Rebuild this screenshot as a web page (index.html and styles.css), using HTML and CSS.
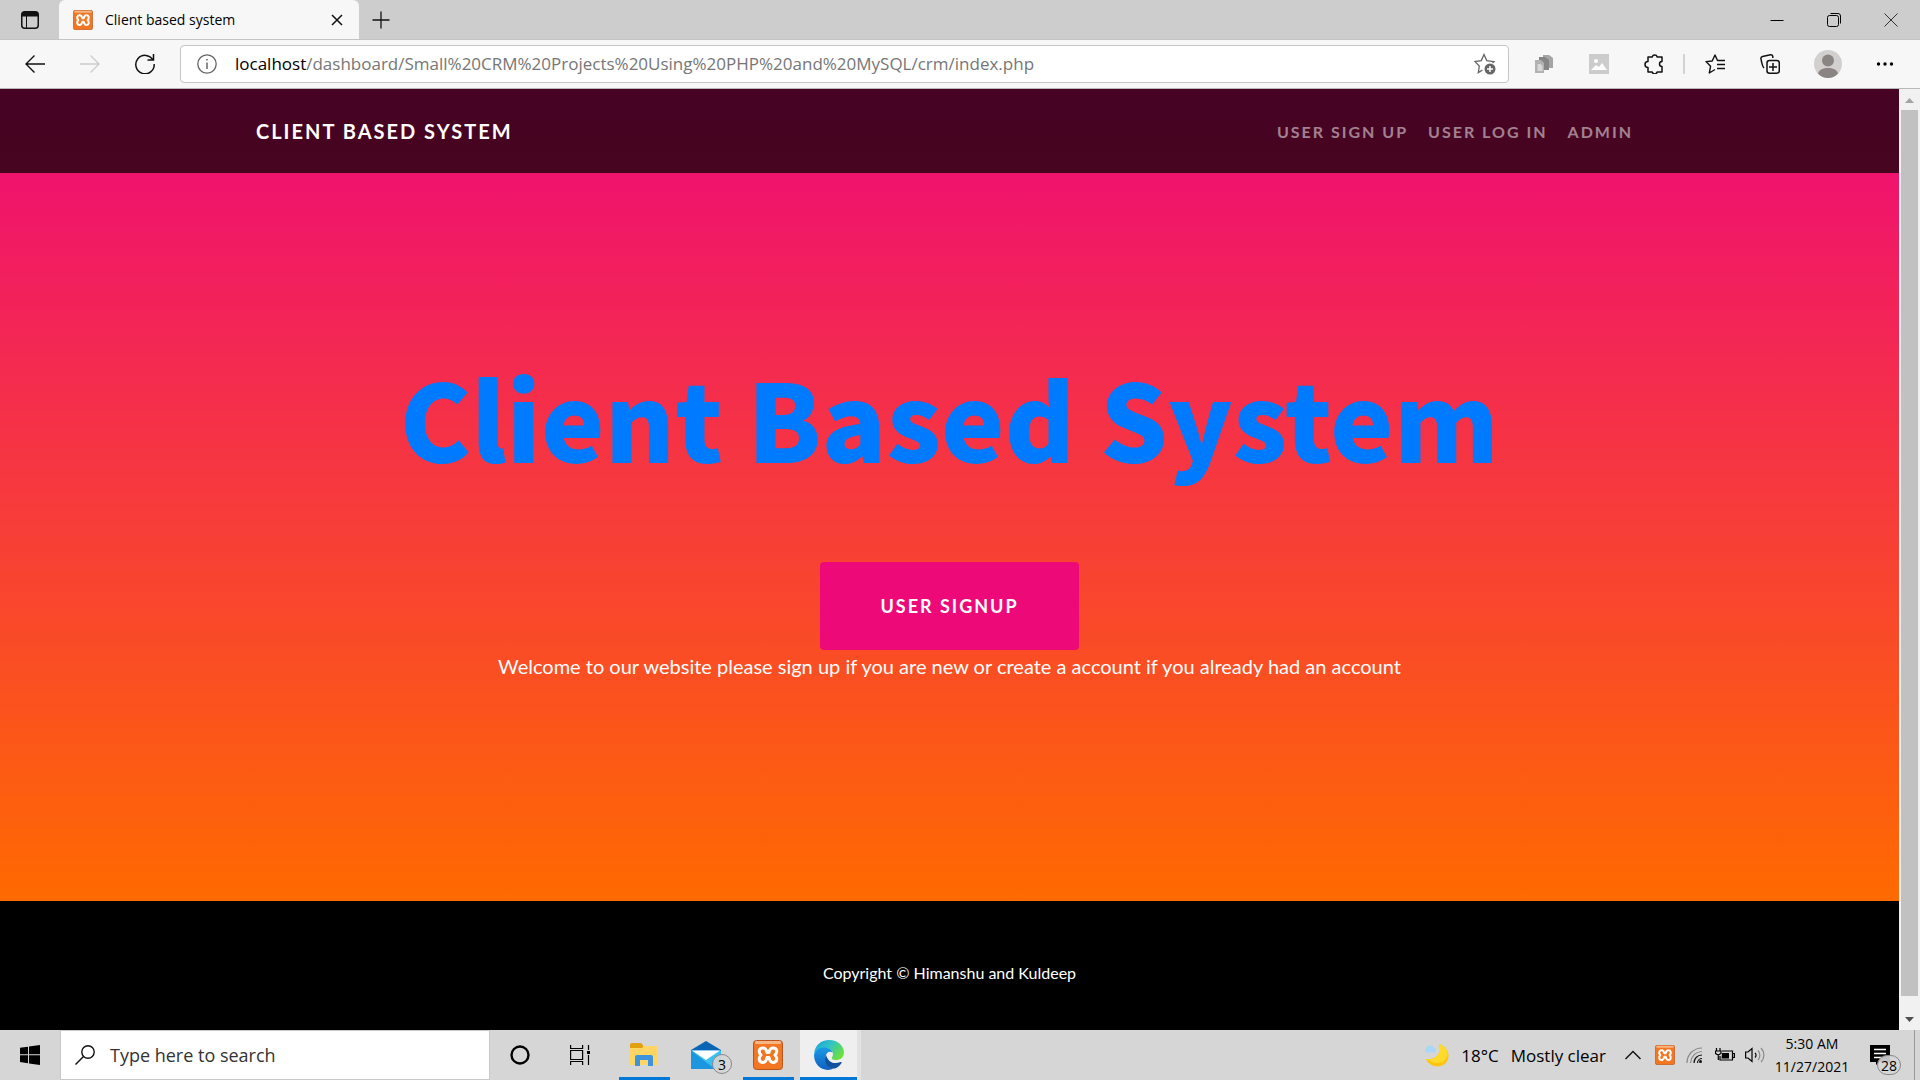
FILE: index.html
```html
<!DOCTYPE html>
<html lang="en">
<head>
<meta charset="utf-8">
<title>Client based system</title>
<link rel="stylesheet" href="styles.css">
</head>
<body>
<svg class="defs" aria-hidden="true">
  <defs>
    <symbol id="xampp" viewBox="0 0 30 30">
      <rect x="0.5" y="0.5" width="29" height="29" rx="3" fill="#f37623" stroke="#b5561c"/>
      <rect x="2" y="1" width="26" height="3" rx="1" fill="#f9b483"/>
      <path d="M10 8C6 8 5 12 8 15 5 18 6 22.500 10 22.500c3 0 3.500-2.500 4-5h2c.5 2.500 1 5 4 5 4 0 5-4.500 2-7.500 3-3 2-7-2-7-3 0-3.500 2-4 4.500h-2C13.500 10 13 8 10 8z" fill="none" stroke="#fff" stroke-width="3" stroke-linejoin="round"/>
    </symbol>
  </defs>
</svg>

<header class="browser">
  <div class="tabstrip">
    <button class="tab-actions" aria-label="Tab actions">
      <svg width="18" height="18" viewBox="0 0 18 18" fill="none" stroke="#111"><rect x="0.750" y="0.750" width="16.500" height="16.500" rx="3" stroke-width="1.500"/><path d="M1 3h16M1 4.500h16M1.500 2h15" stroke-width="2"/><path d="M5.500 5v12"/></svg>
    </button>
    <div class="tab">
      <svg width="20" height="20"><use href="#xampp"/></svg>
      <span class="tab-title">Client based system</span>
      <button class="tab-close" aria-label="Close tab"><svg width="12" height="12" viewBox="0 0 12 12" stroke="#111" stroke-width="1.500"><path d="M1 1l10 10M11 1L1 11"/></svg></button>
    </div>
    <button class="new-tab" aria-label="New tab"><svg width="18" height="18" viewBox="0 0 18 18" stroke="#111" stroke-width="1.300"><path d="M9 .5v17M.5 9h17"/></svg></button>
    <div class="window-buttons">
      <button aria-label="Minimize"><svg width="14" height="14" viewBox="0 0 14 14" stroke="#000"><path d="M.5 7.500h13"/></svg></button>
      <button aria-label="Restore"><svg width="14" height="14" viewBox="0 0 14 14" fill="none" stroke="#000"><rect x=".5" y="2.500" width="11" height="11" rx="2"/><path d="M3.500.5h7.500a2.500 2.500 0 0 1 2.500 2.500v7.500"/></svg></button>
      <button aria-label="Close"><svg width="14" height="14" viewBox="0 0 14 14" stroke="#333"><path d="M.5.5l13 13M13.500.5l-13 13"/></svg></button>
    </div>
  </div>
  <div class="toolbar">
    <button aria-label="Back"><svg width="20" height="18" viewBox="0 0 20 18" fill="none" stroke="#111" stroke-width="1.400"><path d="M20 9H1M9.500.5L1 9l8.500 8.500"/></svg></button>
    <button aria-label="Forward" disabled><svg width="20" height="18" viewBox="0 0 20 18" fill="none" stroke="#ccc" stroke-width="1.400"><path d="M0 9h19M10.500.5L19 9l-8.500 8.500"/></svg></button>
    <button aria-label="Refresh"><svg width="20" height="20" viewBox="0 0 20 20" fill="none" stroke="#111" stroke-width="1.500"><path d="M18 6A9.200 9.200 0 1 0 19.200 10M18.500 0v6h-6"/></svg></button>
    <div class="address">
      <svg width="20" height="20" viewBox="0 0 20 20" fill="none" stroke="#666" stroke-width="1.300"><circle cx="10" cy="10" r="9.200"/><path d="M10 8.500v6.500M10 5v1.600" stroke-width="1.500"/></svg>
      <a class="url" href="#"><span>localhost</span>/dashboard/Small%20CRM%20Projects%20Using%20PHP%20and%20MySQL/crm/index.php</a>
      <button class="favorite" aria-label="Add to favorites"><svg width="22" height="22" viewBox="0 0 22 22" fill="none" stroke="#666" stroke-width="1.300"><path d="M8.500 17L4.300 19.600 5.300 13 1 8.600 7.300 7.600 10 1.500 12.800 7.600 20 8.600 18.500 10"/><circle cx="16" cy="16" r="5.500" fill="#666" stroke="none"/><path d="M16 13v6M13 16h6" stroke="#fff" stroke-width="1.500"/></svg></button>
    </div>
    <button aria-label="Copy extension"><svg width="20" height="20" viewBox="0 0 20 20"><path d="M9 1h6l4 3v10H9z" fill="#a5a5a5"/><path d="M5 3h6l4 3v10H5z" fill="#858585"/><path d="M1 6h6l3 3v10H1z" fill="#b2b2b2"/><path d="M3.500 10h3l2 2v5h-5z" fill="#d8d8d8"/></svg></button>
    <button aria-label="Picture extension"><svg width="20" height="20" viewBox="0 0 20 20"><path d="M0 0h20v20H0z" fill="#ccc"/><circle cx="7" cy="7" r="2" fill="#fff"/><path d="M2 16l5-5 3 2 3-4 5 7z" fill="#fff"/></svg></button>
    <button aria-label="Extensions"><svg width="20" height="20" viewBox="0 0 20 20" fill="none" stroke="#111" stroke-width="1.500"><path d="M4 3h4.200a2.600 2.600 0 0 1 5 0H18v4.500a2.500 2.500 0 0 0 0 5V18h-4.800a2.600 2.600 0 0 1-5 0H4v-4.500a3 3 0 0 1 0-6z" stroke-linejoin="round"/></svg></button>
    <span class="divider"></span>
    <button aria-label="Favorites"><svg width="20" height="20" viewBox="0 0 20 20" fill="none" stroke="#111" stroke-width="1.400"><path d="M10 15.500L4.300 19 5.600 12.200 1 7.600 7.200 7 10 1 12.500 6.500H20M12 10.500h8M12 14.500h8" stroke-linejoin="round"/></svg></button>
    <button aria-label="Collections"><svg width="20" height="20" viewBox="0 0 20 20" fill="none" stroke="#111" stroke-width="1.500"><rect x="7" y="6.500" width="12.300" height="12.700" rx="2.500"/><path d="M13 9v8M9 13h8M4 14C2.500 12.500 1.500 8 1 5a2 2 0 0 1 1.500-2.500L10.500.8a2 2 0 0 1 2.300 1.700V4"/></svg></button>
    <button class="wide profile" aria-label="Profile"><svg width="28" height="28" viewBox="0 0 28 28"><circle cx="14" cy="14" r="14" fill="#d2d0ce"/><circle cx="14" cy="10.500" r="6" fill="#8a8583"/><path d="M4 23.500c1-4 5.500-5.500 10-5.500s9 1.500 10 5.500c-5.500 6-14.500 6-20 0z" fill="#8a8583"/></svg></button>
    <button class="wide" aria-label="Settings and more"><svg width="18" height="6" viewBox="0 0 18 6"><circle cx="2.500" cy="3" r="1.700"/><circle cx="9" cy="3" r="1.700"/><circle cx="15.500" cy="3" r="1.700"/></svg></button>
  </div>
</header>

<div class="viewport">
  <div class="page">
    <div class="hero">
      <nav class="navbar">
        <div class="container">
          <a class="brand" href="#">Client Based System</a>
          <ul class="nav-links">
            <li><a href="#">User Sign Up</a></li>
            <li><a href="#">User Log In</a></li>
            <li><a href="#">Admin</a></li>
          </ul>
        </div>
      </nav>
      <main class="masthead">
        <h1>Client Based System</h1>
        <button class="signup">User Signup</button>
        <p>Welcome to our website please sign up if you are new or create a account if you already had an account</p>
      </main>
    </div>
    <footer class="footer"><p>Copyright © Himanshu and Kuldeep</p></footer>
  </div>
  <div class="scrollbar" aria-hidden="true">
    <svg width="21" height="21" viewBox="0 0 21 21"><path d="M6 14h9l-4.500-5z" fill="#a3a3a3"/></svg>
    <div class="thumb"></div>
    <svg width="21" height="21" viewBox="0 0 21 21"><path d="M6 8h9l-4.500 5z" fill="#505050"/></svg>
  </div>
</div>

<footer class="taskbar">
  <button class="start" aria-label="Start"><svg width="20" height="20" viewBox="0 0 20 20"><path d="M0 2.800L8 1.700v7.600H0zM9 1.500L20 0v9.300H9zM0 10.300h8v7.900L0 17.100zM9 10.300h11V20L9 18.400z"/></svg></button>
  <label class="search">
    <svg width="20" height="20" viewBox="0 0 20 20" fill="none" stroke="#111" stroke-width="1.400"><circle cx="13" cy="7" r="6.200"/><path d="M8.500 11.500L.5 19.500"/></svg>
    <input type="text" placeholder="Type here to search" aria-label="Type here to search">
  </label>
  <div class="system">
    <button aria-label="Cortana"><svg width="20" height="20" viewBox="0 0 20 20" fill="none" stroke="#000" stroke-width="2.400"><circle cx="10" cy="10" r="8.500"/></svg></button>
    <button aria-label="Task View"><svg width="20" height="20" viewBox="0 0 20 20" fill="none" stroke="#000" stroke-width="1.200"><path d="M.6 0v3.500h12V0M.6 20v-3.500h12V20M.6 5.500h12v9H.6zM18.500 0v5M18.500 10v10"/><path d="M17 6h3v3h-3z" fill="#000" stroke="none"/></svg></button>
  </div>
  <button class="slot running" aria-label="File Explorer"><svg width="28" height="24" viewBox="0 0 28 24"><path d="M0 2a2 2 0 0 1 2-2h9l2 2v4H0z" fill="#e0a010"/><path d="M0 5h12l2-2h12.500a1 1 0 0 1 1 1v18H0z" fill="#ffd566"/><path d="M5 23V14a2 2 0 0 1 2-2h14a2 2 0 0 1 2 2v9h-5v-6h-8v6z" fill="#3b94dc"/></svg></button>
  <button class="slot" aria-label="Mail, 3 unread"><svg width="30" height="28" viewBox="0 0 30 28"><path d="M0 9L15 0l15 9v19H0z" fill="#0b65b5"/><path d="M0 9.500V28h30V9.500z" fill="#3ac0f2"/><path d="M0 9.500L24 28H0z" fill="#1b96df"/><path d="M1 9.500h28L15 19z" fill="#fff"/></svg><span class="badge">3</span></button>
  <button class="slot running" aria-label="XAMPP"><svg width="30" height="30"><use href="#xampp"/></svg></button>
  <button class="slot running active" aria-label="Microsoft Edge"><svg width="30" height="30" viewBox="0 0 30 30"><defs><linearGradient id="eg" x1="0" y1="0" x2="1" y2=".6"><stop offset="0" stop-color="#1b9de2"/><stop offset=".5" stop-color="#31c4c4"/><stop offset="1" stop-color="#6be03e"/></linearGradient><linearGradient id="eb" x1="0" y1="0" x2="0" y2="1"><stop offset="0" stop-color="#1a9ae6"/><stop offset="1" stop-color="#0f60c0"/></linearGradient></defs><path d="M0 14C1 5 7 0 15 0c9 0 15 6 15 12.500 0 5-4 7.500-8 7.500-3 0-5-1-4-2.500 3-5-1-9.500-7-9.500C6 8 2 10.500 0 14z" fill="url(#eg)"/><path d="M0 15C1 10.500 5 7.500 10 7.500c5 0 8 2.500 8.500 5C16 10.500 12 12 11.500 17c-.5 6 4 11 8.500 11.500C10 33 0 26 0 15z" fill="url(#eb)"/><path d="M12 15c-3 6 1 14 9 13.500 3-1 5-3 6.500-5.500.5-.8-.3-1.300-1-1-6 2.500-12 1-14.500-7z" fill="#10529b"/></svg></button>
  <div class="tray">
    <button class="weather"><svg width="25" height="24" viewBox="0 0 25 24"><path d="M15 1c7 2 11 9 9 15-2 7-11 10-18 5-2-1-3-3-4-5 8 2 17-5 13-15z" fill="#fdc50f"/><path d="M15 1c7 2 10 8 8 13-3 7-12 8-21 2 8 2 17-5 13-15z" fill="#ffd92b"/><path d="M2 9.500a2.500 2.500 0 0 1 0-4 4.500 4.500 0 0 1 8-1 2.700 2.700 0 0 1 .5 5z" fill="#a8d8f5"/></svg><span>18°C</span><span>Mostly clear</span></button>
    <button class="chevron" aria-label="Show hidden icons"><svg width="16" height="10" viewBox="0 0 16 10" fill="none" stroke="#111" stroke-width="1.400"><path d="M.5 9L8 1.500 15.500 9"/></svg></button>
    <button aria-label="XAMPP status"><svg width="20" height="20"><use href="#xampp"/></svg></button>
    <button aria-label="Network"><svg width="18" height="16" viewBox="0 0 18 16" fill="none" stroke="#111" stroke-width="1.200"><path d="M1 16C1 8 7 1 16 1M4.500 16C5 10 9 5 16 4.500" stroke="#888"/><path d="M8 16c0-4 3-8 8-8M11.500 16c0-2.500 2-4.500 4.500-4.500"/><circle cx="14.500" cy="14.500" r="1.500" fill="#111" stroke="none"/></svg></button>
    <button aria-label="Battery"><svg width="20" height="14" viewBox="0 0 20 14" fill="none" stroke="#000" stroke-width="1.200"><path d="M7 3h10.500v9H5V8M18 5.500h1.400v4H18M1.500 0v3M5 0v3M.5 3h5.500v2.500L3.300 7 .5 5.500zM3.300 7v5"/><path d="M7 5h7v5.500H6.500z" fill="#000" stroke="none"/></svg></button>
    <button aria-label="Volume"><svg width="20" height="16" viewBox="0 0 20 16" fill="none" stroke="#000" stroke-width="1.200"><path d="M.6 5v6H3l4 3.500v-13L3 5z"/><path d="M10 6a3 3 0 0 1 0 4.500"/><path d="M13 3.500a7 7 0 0 1 0 9.500M16 1a10 10 0 0 1 0 14" stroke="#888"/></svg></button>
    <div class="clock"><time>5:30 AM</time><time>11/27/2021</time></div>
    <button class="notices" aria-label="28 notifications"><svg width="20" height="20" viewBox="0 0 20 20"><path d="M0 0h20v17H9l-3 3v-3H0z"/><path d="M4 4.500h12M4 8.500h12M4 12.500h8" stroke="#fff" stroke-width="1.300"/></svg><span class="badge">28</span></button>
    <span class="show-desktop"></span>
  </div>
</footer>
</body>
</html>
```
FILE: styles.css
```css
* { box-sizing: border-box; margin: 0; padding: 0; }

body {
  display: flex;
  flex-direction: column;
  min-height: 100vh;
  font-family: "Open Sans", "Noto Sans", sans-serif;
  color: #000;
}

button {
  display: flex;
  align-items: center;
  justify-content: center;
  border: 0;
  background: none;
  font: inherit;
  color: inherit;
}

a { color: inherit; text-decoration: none; }
svg { display: block; flex: none; }
.defs { display: none; }

/* Browser window */
.tabstrip { display: flex; height: 39px; background: #cdcdcd; }
.tab-actions { width: 59px; border-radius: 0 0 6px 0; padding-left: 1px; }
.tab {
  display: flex;
  align-items: center;
  width: 300px;
  padding: 0 10px 0 14px;
  gap: 12px;
  background: #f7f7f7;
  border-radius: 6px 6px 0 0;
}
.tab-title { flex: 1; font-size: 14px; line-height: 20px; white-space: nowrap; }
.tab-close { width: 24px; height: 24px; }
.new-tab { width: 44px; }
.window-buttons { display: flex; margin: 0 1px 0 auto; }
.window-buttons button { width: 57px; }

.toolbar {
  display: flex;
  align-items: center;
  height: 50px;
  padding: 0 7px 1px;
  background: #f7f7f7;
  border-top: 1px solid #c4c4c4;
  border-bottom: 1px solid #b9b9b9;
}
.toolbar > button { width: 55px; height: 40px; }
.toolbar > .wide { width: 57px; }
.toolbar > .profile { margin-left: 2px; }
.address {
  display: flex;
  flex: 1;
  align-items: center;
  height: 38px;
  margin: 0 7px 0 8px;
  padding: 0 12px 0 16px;
  gap: 18px;
  background: #fff;
  border: 1px solid #c6c6c6;
  border-radius: 4px;
}
.url { flex: 1; font-size: 17px; line-height: 24px; color: #767676; white-space: nowrap; }
.url span { color: #000; }
.divider { width: 2px; height: 20px; margin: 0 2px; background: #d2d2d2; }

/* Web page */
.viewport { display: flex; flex: 1; }
.page { display: flex; flex: 1; flex-direction: column; font-family: Lato, sans-serif; }
.hero {
  display: flex;
  flex: 1;
  flex-direction: column;
  background: linear-gradient(to bottom, #ee0979, #ff6a00);
  color: #fff;
}
.navbar { padding: 20px 0; background: rgba(0, 0, 0, 0.7); text-transform: uppercase; }
.container {
  display: flex;
  align-items: center;
  justify-content: space-between;
  max-width: 1425px;
  height: 44px;
  margin: 0 auto;
  padding: 0 19px;
}
.brand { font-size: 20px; font-weight: 700; letter-spacing: 2px; }
.nav-links { display: flex; list-style: none; }
.nav-links a {
  padding: 10px;
  font-size: 16px;
  font-weight: 700;
  letter-spacing: 2px;
  color: rgba(255, 255, 255, 0.5);
}
.masthead {
  display: flex;
  flex: 1;
  flex-direction: column;
  align-items: center;
  justify-content: center;
  padding-bottom: 47px;
}
.masthead h1 {
  font-family: "Noto Sans CJK JP", sans-serif;
  font-size: 107px;
  font-weight: 900;
  line-height: 144px;
  color: #007bff;
}
.signup {
  margin-top: 73px;
  padding: 30px 60px;
  background: #ee0979;
  border-radius: 4px;
  font-size: 18px;
  font-weight: 700;
  line-height: 28px;
  letter-spacing: 2px;
  text-transform: uppercase;
}
.masthead p { font-size: 20px; line-height: 32px; }
.footer { padding: 63px 0 49px; background: #000; color: #fff; text-align: center; }
.footer p { font-size: 16px; line-height: 17px; }

.scrollbar { display: flex; flex-direction: column; width: 21px; background: #f1f1f1; }
.thumb { flex: 1; margin: 0 2px 13px; background: #c1c1c1; }

/* Taskbar */
.taskbar { display: flex; height: 50px; background: #d6d6d6; }
.start { width: 60px; }
.search {
  display: flex;
  align-items: center;
  width: 430px;
  padding-left: 14px;
  gap: 15px;
  background: #fff;
  border: 1px solid #c8c8c8;
}
.search input { flex: 1; border: 0; outline: 0; background: none; font: 18px/24px "Open Sans", sans-serif; }
.search input::placeholder { color: #333; opacity: 1; }
.system { display: flex; margin-right: 3px; }
.system button { width: 60px; }
.slot { position: relative; width: 62px; }
.running::after {
  content: "";
  position: absolute;
  right: 5px;
  bottom: 0;
  left: 6px;
  height: 3px;
  background: #0078d7;
}
.active { width: 61px; margin-left: 1px; background: #efefef; border-right: 4px solid #e2e2e2; }
.active::after { right: 0; left: 0; }
.badge {
  position: absolute;
  display: flex;
  align-items: center;
  justify-content: center;
  height: 20px;
  min-width: 20px;
  border: 1px solid #888;
  border-radius: 10px;
  background: rgba(214, 214, 214, 0.9);
  font-size: 14px;
}
.slot .badge { right: 5px; bottom: 6px; }
.tray { display: flex; margin-left: auto; }
.tray button { width: 30px; }
.tray .weather { width: auto; margin-right: 10px; gap: 12px; font-size: 17px; white-space: nowrap; }
.tray .chevron { width: 34px; }
.clock {
  display: flex;
  flex-direction: column;
  align-items: center;
  justify-content: center;
  width: 84px;
  font-size: 14px;
  line-height: 23px;
}
.tray .notices { position: relative; width: 60px; padding-right: 8px; }
.notices .badge { right: 13px; bottom: 5px; min-width: 24px; }
.show-desktop { width: 6px; border-left: 1px solid #999; }
```
